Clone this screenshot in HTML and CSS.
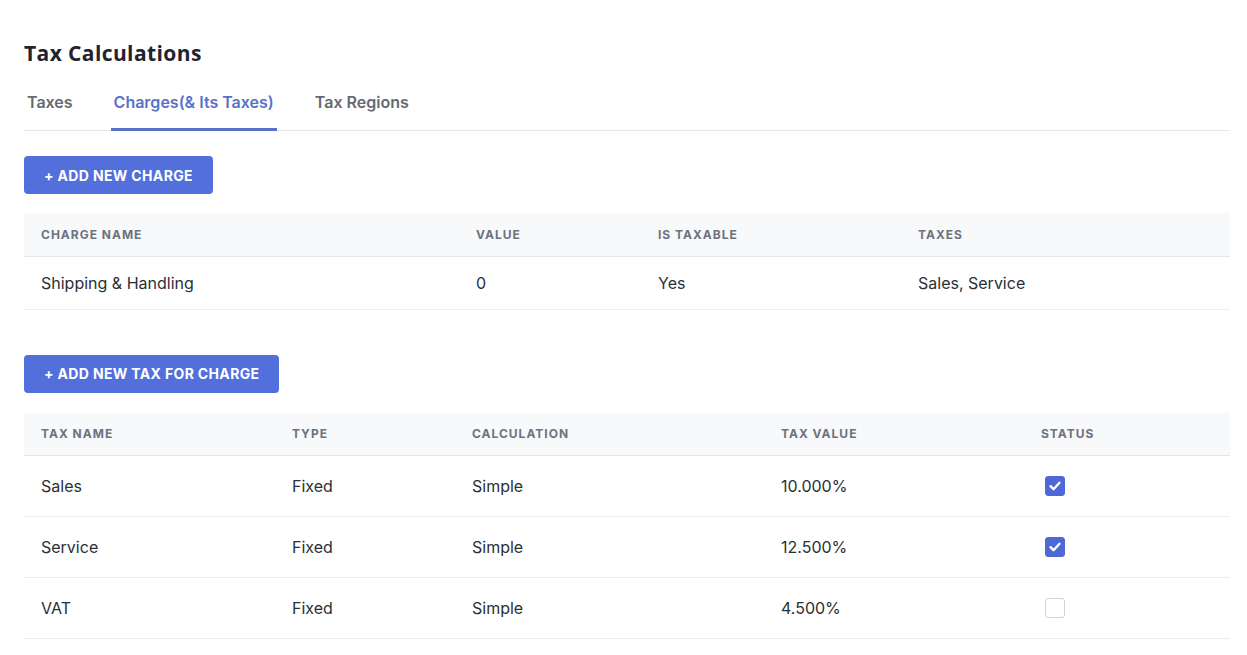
FILE: index.html
```html
<!DOCTYPE html>
<html>
<head>
<meta charset="utf-8">
<link rel="stylesheet" href="styles.css">
</head>
<body>
<div class="page">
  <h1 class="title">Tax Calculations</h1>
  <nav class="tabs">
    <span class="tab">Taxes</span>
    <span class="tab active">Charges(&amp; Its Taxes)</span>
    <span class="tab">Tax Regions</span>
  </nav>

  <section class="block first">
    <button class="btn">+ ADD NEW CHARGE</button>
    <table class="grid charges">
      <colgroup><col class="c1"><col class="c2"><col class="c3"><col class="c4"></colgroup>
      <thead><tr><th>CHARGE NAME</th><th>VALUE</th><th>IS TAXABLE</th><th>TAXES</th></tr></thead>
      <tbody><tr><td>Shipping &amp; Handling</td><td>0</td><td>Yes</td><td>Sales, Service</td></tr></tbody>
    </table>
  </section>

  <section class="block second">
    <button class="btn">+ ADD NEW TAX FOR CHARGE</button>
    <table class="grid taxes">
      <colgroup><col class="t1"><col class="t2"><col class="t3"><col class="t4"><col class="t5"></colgroup>
      <thead><tr><th>TAX NAME</th><th>TYPE</th><th>CALCULATION</th><th>TAX VALUE</th><th>STATUS</th></tr></thead>
      <tbody>
        <tr><td>Sales</td><td>Fixed</td><td>Simple</td><td>10.000%</td><td><span class="check on"><svg viewBox="0 0 20 20" width="20" height="20"><path d="M5.5 10.2l3 3 6-6.4" fill="none" stroke="#fff" stroke-width="2.4" stroke-linecap="round" stroke-linejoin="round"/></svg></span></td></tr>
        <tr><td>Service</td><td>Fixed</td><td>Simple</td><td>12.500%</td><td><span class="check on"><svg viewBox="0 0 20 20" width="20" height="20"><path d="M5.5 10.2l3 3 6-6.4" fill="none" stroke="#fff" stroke-width="2.4" stroke-linecap="round" stroke-linejoin="round"/></svg></span></td></tr>
        <tr><td>VAT</td><td>Fixed</td><td>Simple</td><td>4.500%</td><td><span class="check"></span></td></tr>
      </tbody>
    </table>
  </section>
</div>
</body>
</html>
```
FILE: styles.css
```css
* { box-sizing: border-box; }
html, body { margin: 0; padding: 0; background: #fff; }
body { font-family: Inter, "Noto Sans", sans-serif; color: #212529; }
.page { padding: 38px 17px 0 24px; }
.title {
  margin: 0;
  font-family: "Open Sans", Inter, sans-serif;
  font-size: 21px;
  font-weight: 700;
  letter-spacing: 0.4px;
  color: #1f2430;
  line-height: 30px;
}
.tabs {
  display: flex;
  gap: 35px;
  margin-top: 21px;
  border-bottom: 1px solid #e5e7eb;
  height: 42px;
}
.tab {
  font-family: Inter, sans-serif;
  font-size: 16px;
  font-weight: 600;
  color: #656a70;
  padding: 0 3px;
  line-height: 26px;
  height: 42px;
  border-bottom: 3px solid transparent;
}
.tab.active { color: #5872c9; border-bottom-color: #5872c9; margin-bottom: -1px; }
.block.first { margin-top: 25px; }
.block.second { margin-top: 45px; }
.btn {
  display: block;
  height: 38px;
  padding: 0 20px;
  border: 0;
  border-radius: 4px;
  background: #536fdb;
  color: #fff;
  font-family: Inter, sans-serif;
  font-size: 14px;
  font-weight: 700;
  letter-spacing: 0.35px;
  cursor: pointer;
}
.grid {
  width: 1206px;
  border-collapse: collapse;
  table-layout: fixed;
}
.charges { margin-top: 19px; }
.taxes { margin-top: 20px; }
.grid th {
  background: #f8f9fa;
  text-align: left;
  font-size: 12px;
  font-weight: 700;
  color: #6c737d;
  letter-spacing: 1px;
  padding: 0 17px;
  height: 43px;
  border-bottom: 1px solid #e3e6ea;
}
.grid td {
  font-size: 16px;
  color: #2a2f36;
  padding: 0 17px;
  border-bottom: 1px solid #eceef1;
}
.charges td { height: 53px; }
.taxes td { height: 61px; }
.c1 { width: 435px; } .c2 { width: 182px; } .c3 { width: 260px; } .c4 { width: 329px; }
.t1 { width: 251px; } .t2 { width: 180px; } .t3 { width: 309px; } .t4 { width: 260px; } .t5 { width: 206px; }
.check {
  display: block;
  width: 20px;
  height: 20px;
  margin-left: 4px;
  border: 1px solid #cfd3d8;
  border-radius: 3px;
  background: #fff;
}
.check.on { background: #4e69d6; border-color: #4e69d6; }
.check svg { display: block; margin: -1px; }
```
